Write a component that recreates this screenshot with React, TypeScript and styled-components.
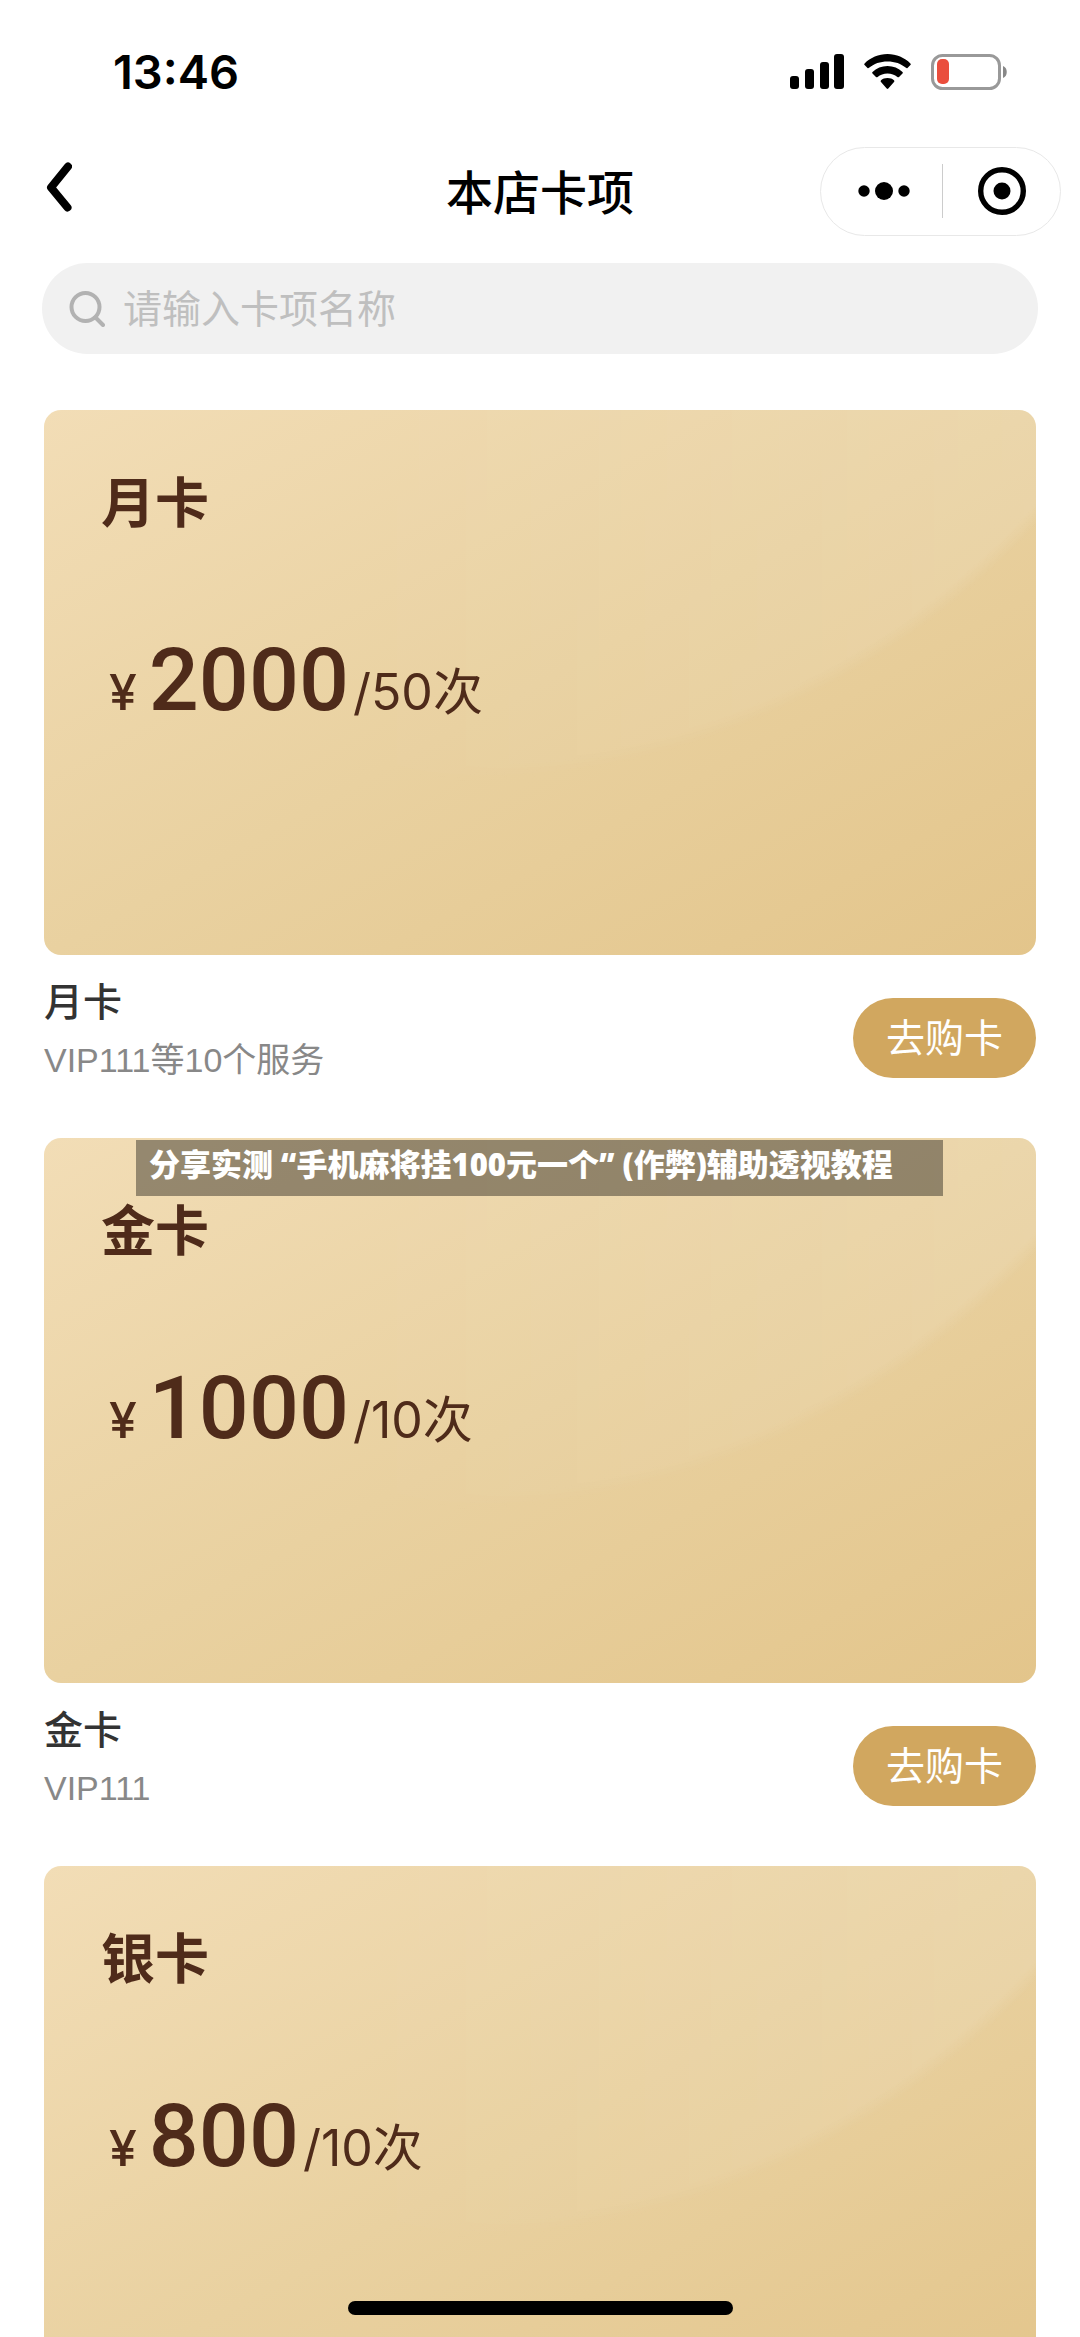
import React from 'react';
import styled, { createGlobalStyle } from 'styled-components';

const GlobalStyle = createGlobalStyle`
  *, *::before, *::after { box-sizing: border-box; }
  body {
    margin: 0;
    background: #fff;
    color: #000;
    font-family: Inter, 'Noto Sans CJK SC', sans-serif;
  }
  button, input { font: inherit; }
  h1, h2, h3, p, ul { margin: 0; padding: 0; }
`;

const Screen = styled.div`
  display: flex;
  flex-direction: column;
  height: 100vh;
  overflow: hidden;
  background: #fff;
`;

const StatusBar = styled.div`
  display: flex;
  flex: none;
  align-items: center;
  justify-content: space-between;
  height: 144px;
  padding: 0 72px 0 113px;
`;

const Clock = styled.time`
  font-size: 47px;
  line-height: 56px;
  font-weight: 600;
`;

const StatusIcons = styled.div`
  display: flex;
  align-items: center;
  gap: 20px;

  svg { display: block; }
`;

const NavBar = styled.header`
  display: grid;
  flex: none;
  grid-template-columns: 1fr auto 1fr;
  align-items: center;
  height: 94px;
  padding: 0 19px;
`;

const BackButton = styled.button`
  justify-self: start;
  padding: 0 27px 8px;
  border: 0;
  background: none;

  svg { display: block; }
`;

const PageTitle = styled.h1`
  padding-top: 4px;
  font-size: 47px;
  line-height: 64px;
  font-weight: 500;
`;

const Capsule = styled.div`
  display: flex;
  justify-self: end;
  align-items: center;
  width: 241px;
  height: 89px;
  border: 1px solid #e8e8e8;
  border-radius: 45px;
`;

const CapsuleButton = styled.button`
  display: flex;
  flex: 1;
  align-items: center;
  justify-content: center;
  height: 100%;
  padding: 0;
  border: 0;
  background: none;

  &:first-child { padding-left: 4px; }
`;

const CapsuleDivider = styled.span`
  width: 1px;
  height: 54px;
  background: #ccc;
`;

const SearchBox = styled.label`
  display: flex;
  flex: none;
  align-items: center;
  gap: 18px;
  height: 91px;
  margin: 25px 42px 0;
  padding: 0 27px;
  border-radius: 46px;
  background: #f1f1f1;

  svg { display: block; flex: none; }
`;

const SearchInput = styled.input`
  flex: 1;
  min-width: 0;
  height: 60px;
  padding: 0;
  border: 0;
  outline: 0;
  background: none;
  color: #333;
  font-size: 39px;

  &::placeholder { color: #bfbfbf; opacity: 1; }
`;

const CardList = styled.ul`
  flex: 1;
  min-height: 0;
  margin-top: 56px;
  padding: 0 44px;
  overflow-y: auto;
  scrollbar-width: none;
  list-style: none;
`;

const CardItem = styled.li`
  position: relative;
`;

const CardFace = styled.section`
  position: relative;
  min-height: 545px;
  padding: 62px 57px;
  overflow: hidden;
  border-radius: 17px;
  background: linear-gradient(to bottom right, #f2ddb6, #e9d1a0 50%, #e3c58b);
  color: #4f2b1a;

  &::before {
    content: '';
    position: absolute;
    inset: 0;
    background: radial-gradient(
      circle at 404px -432px,
      rgba(255, 255, 255, 0.12) 788px,
      rgba(255, 255, 255, 0) 804px
    );
    mask-image: linear-gradient(to right, transparent 30%, #000);
  }
`;

const CardTitle = styled.h2`
  position: relative;
  font-size: 54px;
  line-height: 64px;
  font-weight: 700;
`;

const Price = styled.p`
  position: relative;
  display: flex;
  align-items: baseline;
  margin-top: 94px;
  padding-left: 8px;
  line-height: 100px;
`;

const Currency = styled.span`
  margin-right: 12px;
  font-size: 50px;
  font-weight: 500;
`;

const Amount = styled.span`
  margin-right: 4px;
  font-family: Roboto, sans-serif;
  font-size: 88px;
  font-weight: 500;
`;

const Times = styled.span`
  font-size: 50px;
  font-weight: 400;
`;

const CardInfo = styled.div`
  display: flex;
  align-items: flex-end;
  justify-content: space-between;
  padding: 25px 0 60px;
`;

const CardName = styled.h3`
  color: #333;
  font-size: 39px;
  line-height: 44px;
  font-weight: 500;
`;

const CardService = styled.p`
  margin-top: 18px;
  color: #888;
  font-family: 'Liberation Sans', 'Noto Sans CJK SC', sans-serif;
  font-size: 34px;
  line-height: 36px;
`;

const BuyButton = styled.button`
  width: 183px;
  height: 80px;
  padding: 0;
  border: 0;
  border-radius: 40px;
  background: #d1a75f;
  color: #fff;
  font-size: 39px;
  line-height: 80px;
`;

const Banner = styled.div`
  position: absolute;
  top: 2px;
  left: 92px;
  right: 93px;
  height: 56px;
  padding: 2px 13px;
  background: rgba(0, 0, 0, 0.38);
  color: #fff;
  font-family: 'Noto Sans', 'Noto Sans CJK SC', sans-serif;
  font-size: 31px;
  line-height: 44px;
  font-weight: 900;
  white-space: nowrap;
`;

const HomeIndicator = styled.div`
  position: fixed;
  bottom: 22px;
  left: 50%;
  width: 385px;
  height: 14px;
  margin-left: -192px;
  border-radius: 7px;
  background: #000;
`;

const SignalIcon = () => (
  <svg width="54" height="36" viewBox="0 0 54 36" aria-hidden="true">
    <rect x="0" y="22" width="9" height="13" rx="3" />
    <rect x="15" y="15" width="9" height="20" rx="3" />
    <rect x="30" y="8" width="9" height="27" rx="3" />
    <rect x="44" y="0" width="10" height="35" rx="3" />
  </svg>
);

const WifiIcon = () => (
  <svg width="47" height="36" viewBox="0 0 47 36" aria-hidden="true">
    <path d="M23.5 0C32.400 0 40.600 3.600 46.400 9.400Q47.200 10.200 46.400 11L43.500 13.900Q42.800 14.500 42 13.800C37.200 9.600 30.700 7.400 23.500 7.400S9.800 9.600 5 13.800Q4.200 14.500 3.500 13.900L.6 11Q-.2 10.200 .6 9.400C6.400 3.600 14.600 0 23.500 0Z" />
    <path d="M23.500 12C29.300 12 34.600 14.200 38.500 18Q39.300 18.800 38.500 19.600L35 23Q34.200 23.700 33.400 23C30.800 20.700 27.300 19.500 23.500 19.500S16.200 20.700 13.600 23Q12.800 23.700 12 23L8.500 19.600Q7.700 18.800 8.500 18C12.400 14.200 17.700 12 23.500 12Z" />
    <path d="M23.500 24C26.200 24 28.400 24.900 30 26.300Q30.900 27.200 30 28.100L24.300 34.500Q23.500 35.300 22.700 34.500L17 28.100Q16.100 27.200 17 26.300C18.600 24.900 20.800 24 23.500 24Z" />
  </svg>
);

const BatteryIcon = () => (
  <svg width="77" height="36" viewBox="0 0 77 36" aria-hidden="true">
    <rect x="1.500" y="1.500" width="67" height="33" rx="10" fill="none" stroke="#999" strokeWidth="3" />
    <rect x="6" y="5" width="12" height="25" rx="5" fill="#ea4e3d" />
    <path d="M72 12C77 13.500 77 22.500 72 24Z" fill="#888" />
  </svg>
);

interface StoreCard {
  name: string;
  amount: number;
  times: number;
  service?: string;
  banner?: string;
}

const cards: StoreCard[] = [
  { name: '月卡', amount: 2000, times: 50, service: 'VIP111等10个服务' },
  {
    name: '金卡',
    amount: 1000,
    times: 10,
    service: 'VIP111',
    banner: '分享实测 “手机麻将挂100元一个” (作弊)辅助透视教程',
  },
  { name: '银卡', amount: 800, times: 10 },
];

export default function App() {
  return (
    <Screen lang="zh-CN">
      <GlobalStyle />
      <StatusBar>
        <Clock>13:46</Clock>
        <StatusIcons>
          <SignalIcon />
          <WifiIcon />
          <BatteryIcon />
        </StatusIcons>
      </StatusBar>
      <NavBar>
        <BackButton aria-label="返回">
          <svg width="26" height="50" viewBox="0 0 26 50" fill="none" stroke="#000" strokeWidth="8" strokeLinecap="round" strokeLinejoin="round">
            <path d="M22 4.500 5 25.500 21.500 45.500" />
          </svg>
        </BackButton>
        <PageTitle>本店卡项</PageTitle>
        <Capsule>
          <CapsuleButton aria-label="更多">
            <svg width="52" height="18" viewBox="0 0 52 18">
              <circle cx="6" cy="9" r="5.700" />
              <circle cx="26" cy="9" r="9" />
              <circle cx="46" cy="9" r="5.700" />
            </svg>
          </CapsuleButton>
          <CapsuleDivider />
          <CapsuleButton aria-label="关闭">
            <svg width="48" height="48" viewBox="0 0 48 48">
              <circle cx="24" cy="24" r="21.300" fill="none" stroke="#000" strokeWidth="5.400" />
              <circle cx="24" cy="24" r="8.500" />
            </svg>
          </CapsuleButton>
        </Capsule>
      </NavBar>
      <SearchBox>
        <svg width="36" height="36" viewBox="0 0 36 36" fill="none" stroke="#b2b2b2" strokeWidth="4" strokeLinecap="round">
          <circle cx="16.500" cy="16" r="14" />
          <path d="M26.500 26.500 34 34" />
        </svg>
        <SearchInput type="text" aria-label="搜索卡项" placeholder="请输入卡项名称" />
      </SearchBox>
      <CardList>
        {cards.map((card) => (
          <CardItem key={card.name}>
            <CardFace>
              <CardTitle>{card.name}</CardTitle>
              <Price>
                <Currency>¥</Currency>
                <Amount>{card.amount}</Amount>
                <Times>/{card.times}次</Times>
              </Price>
            </CardFace>
            {card.service && (
              <CardInfo>
                <div>
                  <CardName>{card.name}</CardName>
                  <CardService>{card.service}</CardService>
                </div>
                <BuyButton>去购卡</BuyButton>
              </CardInfo>
            )}
            {card.banner && <Banner>{card.banner}</Banner>}
          </CardItem>
        ))}
      </CardList>
      <HomeIndicator />
    </Screen>
  );
}
